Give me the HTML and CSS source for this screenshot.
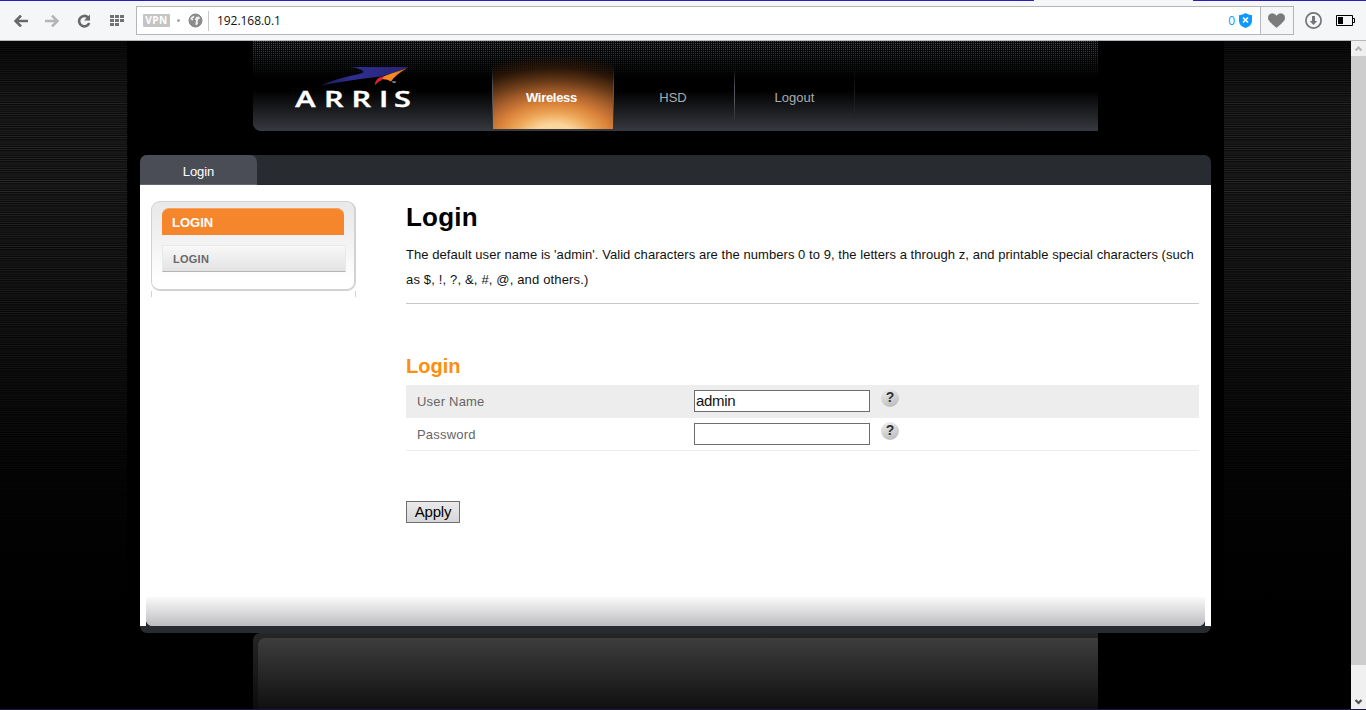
FILE: index.html
```html
<!DOCTYPE html>
<html lang="en">
<head>
<meta charset="utf-8">
<title>Login</title>
<link rel="stylesheet" href="styles.css">
</head>
<body>
<div class="chrome">
  <div class="tabstrip"><span class="strip-left"></span><span class="strip-right"></span></div>
  <div class="toolbar">
    <svg class="nav-icon back" width="14" height="12" viewBox="0 0 14 12"><path d="M7 .6 1.5 6 7 11.4M2 6h12" fill="none" stroke="#686868" stroke-width="2.6"/></svg>
    <svg class="nav-icon forward" width="14" height="12" viewBox="0 0 14 12"><path d="M7 .6 12.5 6 7 11.4M12 6H0" fill="none" stroke="#b4b4b4" stroke-width="2.6"/></svg>
    <svg class="nav-icon reload" width="14" height="14" viewBox="0 0 14 14"><path d="M11 3.4A5.2 5.2 0 1 0 12.2 9" fill="none" stroke="#686868" stroke-width="2.6"/><path d="M13 .6v6H7z" fill="#686868"/></svg>
    <svg class="nav-icon grid" width="14" height="12" viewBox="0 0 14 12"><path d="M0 0h4v3H0zM5 0h4v3H5zM10 0h4v3h-4zM0 4h4v3H0zM5 4h4v3H5zM10 4h4v3h-4zM0 8h4v3H0zM5 8h4v3H5z" fill="#727272"/></svg>
    <div class="address">
      <span class="vpn">VPN</span>
      <span class="dot"></span>
      <svg class="globe" width="15" height="15" viewBox="0 0 15 15"><circle cx="7.5" cy="7.5" r="6.5" fill="#8c8c8c" stroke="#858585"/><path d="M2.200 5.500 4 3.500l2.500-.8L6 4.500 4.500 5.800 5.500 7 4 7.500zM8 4l3-.5 1.200 2-1.900.7-.8 3.800.8.500-2 1.800-1-.8.800-4.200L6.800 7z" fill="#f0f0f0"/></svg>
      <span class="divider"></span>
      <span class="url">192.168.0.1</span>
      <span class="blocked">0</span>
      <svg class="shield" width="13" height="15" viewBox="0 0 13 15"><path d="M0 2.2Q3.8 2 6.5 0 9.2 2 13 2.2V8q0 4.8-6.5 7Q0 12.800 0 8z" fill="#0d99ff"/><path d="m4 4.500 5 5m0-5-5 5" stroke="#fff" stroke-width="1.7"/></svg>
      <span class="heart"><svg width="17" height="15" viewBox="0 0 17 15"><path d="M8.500 14.500Q3 10.200 1 7.200C-.8 4 1 .7 4.200.7 6.300.7 7.700 1.800 8.500 3.200 9.300 1.800 10.700.7 12.800.7 16 .7 17.800 4 16 7.200 14 10.200 8.500 14.500 8.500 14.500z" fill="#7b7b7b" stroke="#6c6c6c" stroke-width=".6"/></svg></span>
    </div>
    <svg class="download" width="17" height="17" viewBox="0 0 17 17"><circle cx="8.500" cy="8.500" r="7.600" fill="none" stroke="#757579" stroke-width="1.700"/><path d="M7 4h3v5h2.200L8.500 13 4.800 9H7z" fill="#757579"/></svg>
    <svg class="battery" width="19" height="11" viewBox="0 0 19 11"><path d="M.5.5h16v10H.5zM17 3.500h1.500v4H17" fill="none" stroke="#000"/><path d="M2 2h5v7H2z"/></svg>
  </div>
</div>
<div class="viewport">
  <div class="backdrop">
    <div class="page">
      <header class="header">
        <svg class="logo" width="120" height="48" viewBox="0 0 120 48">
          <defs>
            <linearGradient id="wing" gradientUnits="userSpaceOnUse" x1="28" x2="114" y1="0" y2="0"><stop offset="0" stop-color="#1d1b55"/><stop offset=".35" stop-color="#302e91"/><stop offset="1" stop-color="#262474"/></linearGradient>
            <linearGradient id="flame" x1="0" y1="1" x2="1" y2="0"><stop offset="0" stop-color="#ff7a16"/><stop offset=".6" stop-color="#f98a26"/><stop offset="1" stop-color="#bb5f12"/></linearGradient>
          </defs>
          <path d="M57 2H115Q103 7 87 11.500 58 14.500 27 20.600 42 13.200 64 9.200 71 8 69 6 66 3.500 57 2z" fill="url(#wing)"/>
          <path d="M113.500 3Q100 7.500 90 11.200 83 14 81 19.500 84 16 88 14.200 93 13.800 97 16.500 101 10 113.500 3z" fill="url(#flame)"/>
          <path d="M90 11.200Q81 12.500 81 20 84 16.500 87.500 15.200z" fill="#d9252f"/>
          <text class="tm" x="98" y="20">™</text>
          <g class="wordmark" transform="scale(1.46 1)"><text x=".9 20.500 39.400 58.200 68.500" y="42">ARRIS</text></g>
        </svg>
        <nav class="main-nav">
          <a class="nav-item active">Wireless</a>
          <a class="nav-item hsd">HSD</a>
          <a class="nav-item logout">Logout</a>
        </nav>
      </header>
      <main class="panel">
        <div class="tabs"><a class="tab">Login</a></div>
        <div class="body">
          <aside class="side">
            <div class="side-box">
              <div class="side-title">LOGIN</div>
              <a class="side-link">LOGIN</a>
            </div>
            <div class="side-tail"></div>
          </aside>
          <section class="content">
            <h1>Login</h1>
            <p class="intro"><span class="lead">The default user name is 'admin'. Valid characters are the numbers 0 to 9, the letters a through z, and printable special characters (such</span><br>as $, !, ?, &amp;, #, @, and others.)</p>
            <h2>Login</h2>
            <div class="row shaded"><label for="user">User Name</label><input id="user" value="admin"><span class="help">?</span></div>
            <div class="row"><label for="pass">Password</label><input id="pass" type="password"><span class="help">?</span></div>
            <button class="apply">Apply</button>
          </section>
        </div>
        <div class="panel-shade"></div>
        <div class="panel-base"></div>
      </main>
      <footer class="footer"></footer>
    </div>
  </div>
  <div class="scrollbar">
    <svg width="15" height="15" viewBox="0 0 15 15"><path d="m4.500 9.500 3-3 3 3" fill="none" stroke="#b5b5b5" stroke-width="2.200"/></svg>
    <span class="thumb"></span>
    <svg width="15" height="15" viewBox="0 0 15 15"><path d="m4.500 6 3 3 3-3" fill="none" stroke="#505050" stroke-width="2.200"/></svg>
  </div>
</div>
<div class="window-edge"></div>
</body>
</html>
```
FILE: styles.css
```css
* { box-sizing: border-box; }
body { margin: 0; width: 1366px; height: 710px; overflow: hidden; display: flex; flex-direction: column; background: #000; font-family: "Liberation Sans", Arial, sans-serif; }
svg { display: block; flex: none; }

.chrome { height: 41px; flex: none; background: #f4f6f8; border-bottom: 1px solid #b3b7b7; }
.tabstrip { height: 1px; display: flex; justify-content: space-between; }
.strip-left { width: 1034px; background: #2d1fb4; }
.strip-right { width: 173px; background: #2d1fb4; }
.toolbar { height: 39px; display: flex; align-items: center; padding: 0 10px 0 14px; }
.back { margin-right: 17px; }
.forward { margin-right: 18px; }
.reload { margin-right: 19px; }
.grid { margin-right: 12px; }
.address { width: 1158px; height: 29px; border: 1px solid #b3b7b7; background: #fff; display: flex; align-items: center; padding-left: 6px; }
.vpn { width: 27px; height: 13px; border-radius: 1px; background: #c4c4c4; color: #fff; font: bold 10px/13px "Open Sans", sans-serif; letter-spacing: .6px; text-align: center; }
.dot { width: 3px; height: 3px; border-radius: 50%; background: #aaa; margin: 0 8px 0 7px; }
.divider { width: 1px; height: 20px; background: #c8c8c8; margin: 0 8px 0 5px; }
.url { font: 12px/18px "Open Sans", sans-serif; color: #111; flex: 1; letter-spacing: -.05px; }
.blocked { font: 12px/18px "Open Sans", sans-serif; color: #0d99ff; margin-right: 4px; }
.shield { margin-right: 8px; }
.heart { width: 33px; height: 27px; border-left: 1px solid #b3b7b7; background: #f4f6f8; display: flex; align-items: center; justify-content: center; padding-right: 1px; }
.download { margin: 0 14px 0 11px; }

.viewport { flex: 1; min-height: 0; display: flex; }
.backdrop {
  flex: 1; display: flex; flex-direction: column; align-items: center;
  background:
    linear-gradient(rgba(0,0,0,.7), rgba(0,0,0,.15) 60px, rgba(0,0,0,.1) 140px, rgba(0,0,0,.4) 280px, rgba(0,0,0,.85) 440px, #000 560px),
    repeating-linear-gradient(#171717 0 1px, #1b1b1b 1px 2px, #181818 2px 3px, #1a1a1a 3px 4px, #121212 4px 5px, #222 5px 6px, #0b0b0b 6px 7px, #2b2b2b 7px 8px, #0b0b0b 8px 9px, #242424 9px 10px, #101010 10px 11px);
}
.page { width: 1097px; height: 668px; background: #000; display: flex; flex-direction: column; align-items: center; }
.header {
  width: 845px; height: 90px; flex: none; margin-bottom: 24px; border-radius: 0 0 0 8px; display: flex; overflow: hidden;
  background:
    linear-gradient(transparent, rgba(0,0,0,.35) 14px, #000 37px, transparent 37px),
    repeating-linear-gradient(90deg, transparent 0 1px, #08090b 1px 2px),
    repeating-linear-gradient(#48494c 0 1px, #101113 1px 2px);
  position: relative;
}
.header::before { content: ""; position: absolute; inset: 37px 0 0; background: linear-gradient(#000 0 12px, #18191c 30px, #373a40); }
.logo { position: relative; margin: 24px 78px 0 41px; }
.wordmark { font: 600 21px "Open Sans", sans-serif; fill: #fff; stroke: #fff; stroke-width: .4px; }
.tm { font: 5px "Open Sans", sans-serif; fill: #fff; }
.main-nav { position: relative; display: flex; }
.nav-item { width: 121px; height: 88px; padding-top: 49px; text-align: center; font-size: 13px; line-height: 16px; color: #a9abb0; background: linear-gradient(transparent 28px, #505159 45px, #55565c 60px, transparent 82px) right / 1px 100% no-repeat; }
.nav-item.active {
  width: 123px; padding-right: 4px; color: #fff; font-weight: bold; letter-spacing: -.3px;
  background:
    linear-gradient(transparent 25px, #50515a 45px, #55565c 60px, transparent 85px) left / 1px 100% no-repeat,
    linear-gradient(transparent 25px, #50515a 45px, #55565c 60px, transparent 85px) 121px 0 / 1px 100% no-repeat,
    radial-gradient(ellipse 140px 82px at 61px 96px, #ffe0aa 0, #fbd49a 16%, #eda657 29%, #d9823a 41%, #a9602c 54%, rgba(105,59,24,.95) 69%, rgba(50,26,9,.8) 84%, transparent 100%) 1px 0 / 120px 100% no-repeat;
}
.hsd { padding-right: 4px; width: 120px; }
.logout { padding-right: 1px; width: 120px; background-image: linear-gradient(transparent 28px, #18191c 50px, #202126 70px, transparent 82px); }

.panel { width: 1071px; height: 478px; flex: none; display: flex; flex-direction: column; }
.tabs { height: 30px; flex: none; background: #282b30; border-radius: 7px 7px 0 0; }
.tab { display: block; width: 117px; height: 30px; background: #4a4d56; border-bottom: 1px solid #62656e; border-radius: 7px 7px 0 0; color: #fff; font-size: 13px; line-height: 33px; text-align: center; letter-spacing: -.1px; }
.body { height: 412px; flex: none; background: #fff; display: flex; }
.side { width: 206px; margin: 16px 49px 0 11px; }
.side-box { width: 205px; height: 90px; border: 1px solid #d2d2d2; border-width: 1px 2px 2px 1px; border-radius: 9px; background: linear-gradient(#e9e9e9, #eee 30%, #fff 90%); padding: 6px 9px 0 10px; }
.side-title { width: 182px; height: 27px; background: #f6862b; border-top: 1px solid #f5a262; border-radius: 7px 7px 0 0; color: #fff; font-size: 13px; font-weight: bold; line-height: 28px; padding-left: 10px; margin-bottom: 10px; }
.side-link { display: block; width: 184px; height: 27px; border: 1px solid #e9e9e9; border-bottom-color: #b4b4b4; background: linear-gradient(#f8f8f8, #e3e3e3); color: #686868; font-size: 11px; font-weight: bold; letter-spacing: .25px; line-height: 26px; padding-left: 10px; }
.side-tail { width: 205px; height: 6px; border: 1px solid #d2d2d2; border-width: 0 1px; }
.content { width: 793px; }
h1 { margin: 16px 0 9px; font-size: 26px; line-height: 32px; letter-spacing: .2px; color: #000; }
.intro { height: 62px; margin: 0 0 48px; border-bottom: 1px solid #c8c8c8; font-size: 13px; line-height: 25px; letter-spacing: .16px; color: #111; white-space: nowrap; }
.lead { letter-spacing: .055px; }
h2 { margin: 0 0 5px; font-size: 20px; line-height: 28px; letter-spacing: 0; color: #ff8e0c; }
.row { height: 33px; display: flex; padding: 5px 0 0 11px; border-bottom: 1px solid #ededed; }
.row.shaded { background: #ededed; }
label { width: 277px; font-size: 13px; line-height: 23px; letter-spacing: .2px; color: #666; }
input { width: 176px; height: 22px; margin: 0 11px 0 0; border: 1px solid #6e6e6e; border-radius: 0; outline: 0; padding: 0 1px 1px; background: #fff; font: 15px "Liberation Sans", Arial, sans-serif; letter-spacing: -.3px; color: #111; }
.help { width: 18px; height: 18px; border-radius: 50%; background: linear-gradient(160deg, #f0f0f0, #b7b7b7); color: #303030; font: bold 14px/17px "Liberation Sans", Arial, sans-serif; text-align: center; margin-top: -1px; }
.apply { display: block; width: 54px; height: 22px; margin: 50px 0 0; padding: 0; border: 1px solid #6e6e6e; border-radius: 0; background: linear-gradient(#eaeaea, #d7d7d7); font: 15px/18px "Liberation Sans", Arial, sans-serif; letter-spacing: -.2px; color: #000; }
.panel-shade { height: 29px; flex: none; border: solid #fff; border-width: 0 6px; background: radial-gradient(circle at 7px 0, transparent 7px, #282b30 7.5px) 0 100% / 7px 7px no-repeat, radial-gradient(circle at 0 0, transparent 7px, #282b30 7.5px) 100% 100% / 7px 7px no-repeat, linear-gradient(#fafafa, #bdbdc0); background-origin: padding-box; background-clip: padding-box, padding-box, border-box; }
.panel-base { height: 7px; flex: none; background: #282b30; border-radius: 0 0 8px 8px; }
.footer { width: 845px; height: 76px; flex: none; padding: 5px 0 0 5px; background: linear-gradient(#262626, #1c1c1c 40%, #0c0c0c); border-radius: 7px 0 0 0; }
.footer::before { content: ""; display: block; height: 71px; border-radius: 7px 0 0 0; background: linear-gradient(#3d3d3d, #292929 45%, #101010); }
.scrollbar { width: 15px; flex: none; background: #f0f0f0; display: flex; flex-direction: column; justify-content: space-between; }
.thumb { height: 609px; background: #cdcdcd; margin-bottom: auto; }
.window-edge { height: 1px; flex: none; background: #1d1440; }
```
